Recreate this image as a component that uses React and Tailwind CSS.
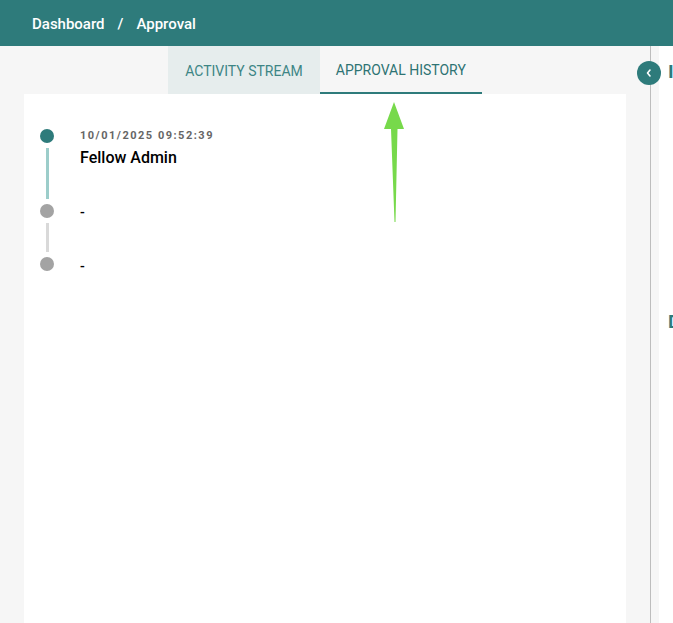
import React from "react"

function Dot({ active }) {
    return (
        <div className={`w-[14px] h-[14px] rounded-full ${active ? "bg-[#2e7b7b]" : "bg-[#a3a3a3]"}`} />
    )
}

export default function App() {
    return (
        <div className="h-[623px] w-[673px] overflow-hidden flex flex-col bg-[#f6f6f6] font-['Roboto',sans-serif]">
            <header className="h-[46px] shrink-0 bg-[#2e7b7b] flex items-center pl-[32px] pt-[2px] text-white text-[15px] font-medium">
                <span>Dashboard</span>
                <span className="mx-[13px]">/</span>
                <span>Approval</span>
            </header>

            <div className="flex flex-1 min-h-0">
                <div className="w-[650px] shrink-0 flex flex-col pl-[24px] pr-[24px]">
                    <div className="flex justify-center h-[48px] shrink-0">
                        <button className="px-[17px] pt-[2px] bg-[#e6eded] text-[#3d8585] text-[14px] uppercase">
                            Activity Stream
                        </button>
                        <button className="px-[16px] pt-[2px] text-[#2e7373] text-[14px] uppercase border-b-2 border-[#2e7b7b]">
                            Approval History
                        </button>
                    </div>
                    <div className="relative flex-1 bg-white pt-[35px] pl-[16px]">
                        <div className="flex">
                            <div className="flex flex-col items-center w-[14px]">
                                <Dot active />
                                <div className="w-[3px] h-[51px] my-[5px] bg-[#9ccdca]" />
                                <Dot />
                                <div className="w-[3px] h-[29px] my-[5px] bg-[#d9d9d9]" />
                                <Dot />
                            </div>
                            <div className="ml-[26px] flex flex-col">
                                <div className="text-[11px] font-bold tracking-[1.5px] text-[#666] leading-[14px]">
                                    10/01/2025 09:52:39
                                </div>
                                <div className="mt-[6px] text-[16px] font-medium text-black leading-[18px]">
                                    Fellow Admin
                                </div>
                                <div className="mt-[38px] text-[14px] font-medium text-black leading-[14px]">-</div>
                                <div className="mt-[40px] text-[14px] font-medium text-black leading-[14px]">-</div>
                            </div>
                        </div>
                        <svg className="absolute left-[359px] top-[8px]" width="24" height="122" viewBox="0 0 24 122">
                            <polygon points="11,0 21,27 14.5,27 12.5,120 11.5,120 8,27 1,27" fill="#77d94b" />
                        </svg>
                    </div>
                </div>

                <div className="relative flex-1 border-l border-[#bdbdbd] pl-[8px]">
                    <div className="h-full bg-white pl-[9px] pt-[14px]">
                        <div className="text-[#2e7b7b] text-[19px] font-bold leading-[24px]">I</div>
                        <div className="mt-[226px] text-[#2e7b7b] text-[19px] font-bold leading-[24px]">D</div>
                    </div>
                    <button className="absolute left-[-14px] top-[15px] w-[24px] h-[24px] rounded-full bg-[#2e7b7b] flex items-center justify-center">
                        <svg width="10" height="10" viewBox="0 0 10 10">
                            <path d="M6 2 L3.5 5 L6 8" stroke="white" strokeWidth="1.6" fill="none" strokeLinecap="round" strokeLinejoin="round" />
                        </svg>
                    </button>
                </div>
            </div>
        </div>
    )
}
